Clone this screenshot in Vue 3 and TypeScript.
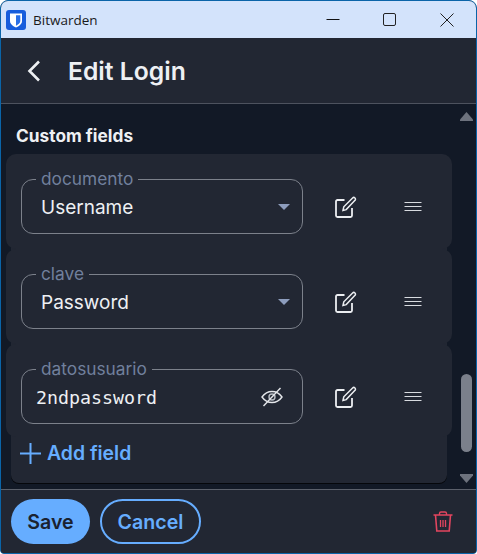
<script setup lang="ts">
interface Field {
  label: string
  value: string
  kind: 'select' | 'secret'
}

const fields: Field[] = [
  { label: 'documento', value: 'Username', kind: 'select' },
  { label: 'clave', value: 'Password', kind: 'select' },
  { label: 'datosusuario', value: '2ndpassword', kind: 'secret' },
]
</script>

<template>
  <div class="window">
    <div class="titlebar">
      <svg class="logo" width="20" height="20" viewBox="0 0 20 20">
        <rect width="20" height="20" rx="3" fill="#175ddc" />
        <path d="M4 3.500h12v7.500c0 3.200-3.200 5.200-6 6.500-2.800-1.300-6-3.300-6-6.500z" fill="#fff" />
        <path d="M10 5.200h4.300v5.800c0 2.200-2.200 3.700-4.300 4.700z" fill="#2a6fe6" />
      </svg>
      <span class="app-name">Bitwarden</span>
      <div class="controls">
        <svg width="14" height="14" viewBox="0 0 14 14"><path d="M0.500 6.500h13" stroke="#111" stroke-width="1" fill="none" /></svg>
        <svg width="14" height="14" viewBox="0 0 14 14"><rect x="0.500" y="0.500" width="12" height="12" rx="1.500" stroke="#222" stroke-width="1" fill="none" /></svg>
        <svg width="14" height="14" viewBox="0 0 14 14"><path d="M0.500 0.500l13 13M13.500 0.500l-13 13" stroke="#222" stroke-width="1" fill="none" /></svg>
      </div>
    </div>

    <header class="header">
      <svg class="back" width="14" height="22" viewBox="0 0 14 22">
        <path d="M12 1.500L2.500 11l9.500 9.500" stroke="#eef0f3" stroke-width="2.600" fill="none" />
      </svg>
      <h1 class="title">Edit Login</h1>
    </header>

    <main class="main">
      <div class="content">
        <h2 class="section">Custom fields</h2>
        <div class="outer">
          <div v-for="f in fields" :key="f.label" class="card" :class="{ last: f.kind === 'secret' }">
            <fieldset class="field">
              <legend class="legend">{{ f.label }}</legend>
              <div class="field-body">
                <span :class="f.kind === 'secret' ? 'mono' : 'value'">{{ f.value }}</span>
                <svg v-if="f.kind === 'select'" class="caret" width="12" height="6" viewBox="0 0 12 6">
                  <path d="M0 0h12L6 6z" fill="#8d9dbd" />
                </svg>
                <svg v-else class="eye" width="22" height="20" viewBox="0 0 22 20">
                  <path d="M1 10c2.500-3.500 6-5.500 10-5.500s7.500 2 10 5.500c-2.500 3.500-6 5.500-10 5.500S3.500 13.500 1 10z" stroke="#e4e6ea" stroke-width="1.400" fill="none" />
                  <circle cx="11" cy="10" r="3" stroke="#b9bdc4" stroke-width="1.400" fill="none" />
                  <path d="M2.500 19L19.500 1" stroke="#e4e6ea" stroke-width="1.400" fill="none" />
                </svg>
              </div>
            </fieldset>
            <button class="icon-btn edit" type="button" aria-label="Edit">
              <svg width="22" height="22" viewBox="0 0 22 22">
                <path d="M9.500 4H2.500A1.500 1.500 0 0 0 1 5.500v14A1.500 1.500 0 0 0 2.500 21h13a1.500 1.500 0 0 0 1.500-1.500V12" stroke="#eceef1" stroke-width="1.800" fill="none" />
                <path d="M8 14.500l.8-3.700L17.600 2a1.600 1.600 0 0 1 2.400 2.300l-8.800 9.300z" stroke="#eceef1" stroke-width="1.500" fill="none" />
              </svg>
            </button>
            <button class="icon-btn drag" type="button" aria-label="Reorder">
              <svg width="18" height="10" viewBox="0 0 18 10">
                <path d="M0.500 0.500h17M0.500 4.500h17M0.500 8.500h17" stroke="#d8dbe0" stroke-width="1" fill="none" />
              </svg>
            </button>
          </div>
          <button class="add" type="button">
            <svg width="21" height="21" viewBox="0 0 21 21">
              <path d="M0 10.500h21M10.500 0v21" stroke="#66adff" stroke-width="2" fill="none" />
            </svg>
            <span>Add field</span>
          </button>
        </div>
      </div>
      <div class="scrollbar">
        <svg width="13" height="9" viewBox="0 0 13 9"><path d="M6.500 0L13 7.500V9H0V7.500z" fill="#6d727d" /></svg>
        <div class="track"><div class="thumb"></div></div>
        <svg width="13" height="9" viewBox="0 0 13 9"><path d="M6.500 9L13 1.500V0H0v1.500z" fill="#6d727d" /></svg>
      </div>
    </main>

    <footer class="footer">
      <button class="btn primary" type="button">Save</button>
      <button class="btn secondary" type="button">Cancel</button>
      <button class="trash" type="button" aria-label="Delete">
        <svg width="20" height="21" viewBox="0 0 20 21">
          <path d="M0.500 4h19M6.500 4V2.500A1.500 1.500 0 0 1 8 1h4a1.500 1.500 0 0 1 1.500 1.500V4" stroke="#e2455f" stroke-width="1.400" fill="none" />
          <path d="M2.500 4l1.300 16h12.400L17.500 4" stroke="#e2455f" stroke-width="1.600" fill="none" />
          <path d="M7.500 9v7M10 9v7M12.500 9v7" stroke="#e2455f" stroke-width="1.300" fill="none" />
        </svg>
      </button>
    </footer>
  </div>
</template>

<style>
html, body { margin: 0; background: #fff; }
</style>

<style scoped>
* { box-sizing: border-box; }
.window {
  width: 477px;
  height: 554px;
  display: flex;
  flex-direction: column;
  border: 1px solid #0a64a8;
  border-radius: 8px 8px 4px 4px;
  overflow: hidden;
  font-family: Inter, "Noto Sans", sans-serif;
  background: #222733;
}
.titlebar {
  height: 37px;
  flex: none;
  display: flex;
  align-items: center;
  padding-left: 5px;
  background: #d3e3fb;
}
.logo { flex: none; }
.app-name {
  margin-left: 7px;
  font: 13.500px "Open Sans", sans-serif;
  color: #1a1a1a;
}
.controls {
  margin-left: auto;
  display: flex;
  gap: 43px;
  padding-right: 22px;
}
.header {
  height: 66px;
  flex: none;
  display: flex;
  align-items: center;
  padding-left: 26px;
  border-bottom: 1px solid #4d525e;
  background: #222733;
}
.back { flex: none; }
.title {
  margin: 0 0 -1px 27px;
  font-size: 24.700px;
  font-weight: 600;
  color: #eef0f3;
}
.main {
  flex: 1;
  min-height: 0;
  display: flex;
  background: #121926;
}
.content {
  flex: 1;
  padding: 0 12px 0 10px;
}
.section {
  margin: 22px 0 8px 5px;
  font-size: 17.300px;
  line-height: 20px;
  font-weight: 700;
  color: #eef0f3;
}
.outer {
  height: 329px;
  background: #222733;
  border-radius: 8px;
  box-shadow: 0 1px 0 #05070b;
}
.card {
  width: 446px;
  height: 95px;
  margin: 0 -5px;
  padding: 15px 0 0 15px;
  display: flex;
  align-items: flex-start;
  background: #222733;
  border-radius: 10px;
}
.card.last { height: 93px; }
.field {
  width: 282px;
  margin: 0;
  padding: 0 19px;
  border: 1px solid #7c818b;
  border-radius: 12px;
}
.legend {
  margin-left: -5px;
  padding: 0 5px;
  font-size: 17.300px;
  line-height: 20px;
  color: #71809d;
}
.field-body {
  height: 44px;
  padding-bottom: 8px;
  display: flex;
  align-items: center;
  justify-content: space-between;
}
.value {
  font-size: 19px;
  color: #eef0f3;
}
.mono {
  margin-left: -5px;
  font: 18.300px "DejaVu Sans Mono", monospace;
  color: #eef0f3;
}
.caret { margin-right: -7px; }
.eye { margin-right: 0; }
.icon-btn {
  width: 40px;
  height: 40px;
  margin-top: 18px;
  padding: 0;
  border: 0;
  background: none;
  display: flex;
  align-items: center;
  justify-content: center;
}
.edit { margin-left: 23px; }
.drag { margin-left: 27px; }
.add {
  height: 32px;
  padding: 0 0 0 9px;
  border: 0;
  background: none;
  display: flex;
  align-items: center;
  gap: 6px;
  font: 600 19.400px Inter, sans-serif;
  color: #66adff;
}
.scrollbar {
  flex: none;
  width: 17px;
  padding: 8px 2px 6px 0;
  display: flex;
  flex-direction: column;
  align-items: center;
}
.track {
  flex: 1;
  padding-bottom: 22px;
  display: flex;
  align-items: flex-end;
}
.thumb {
  width: 11px;
  height: 78px;
  border-radius: 6px;
  background: #7b808b;
}
.footer {
  height: 64px;
  flex: none;
  display: flex;
  align-items: center;
  padding: 0 0 0 10px;
  border-top: 1px solid #5b606b;
  background: #222733;
}
.btn {
  height: 45px;
  border-radius: 23px;
  font: 600 19.600px Inter, sans-serif;
}
.primary {
  width: 79px;
  padding: 0;
  border: 0;
  background: #66adff;
  color: #1a2230;
}
.secondary {
  width: 101px;
  margin-left: 10px;
  padding: 0;
  border: 2px solid #66adff;
  background: none;
  color: #66adff;
}
.trash {
  margin-left: auto;
  margin-right: 23px;
  padding: 0;
  border: 0;
  background: none;
  display: flex;
}
</style>
